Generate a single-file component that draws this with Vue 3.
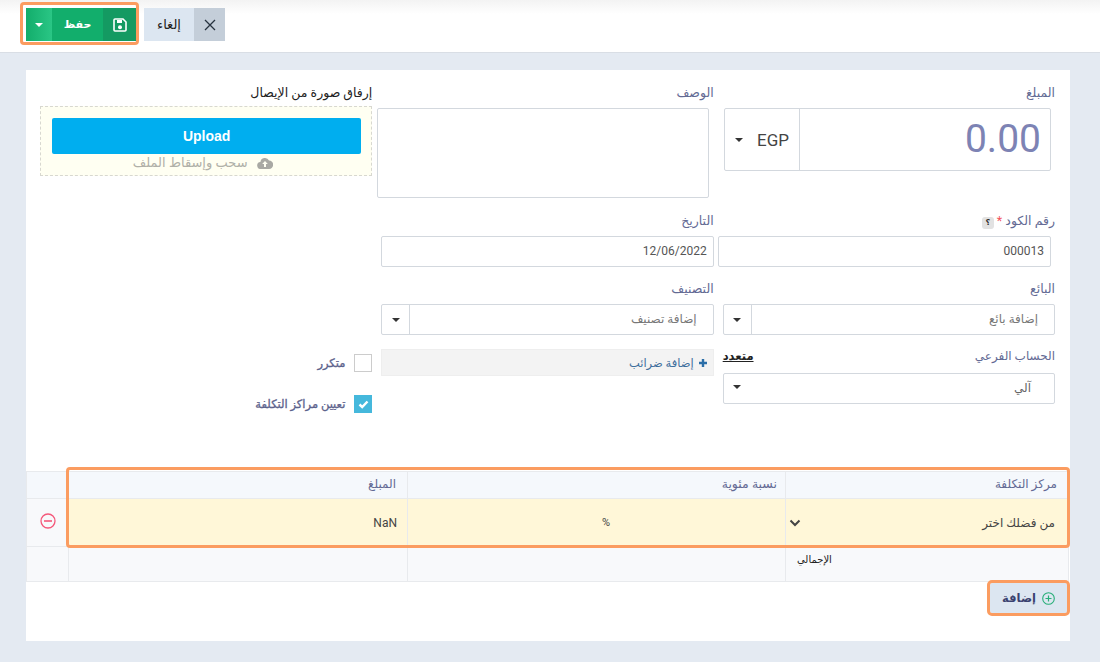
<script setup>
const rows = [
  { label: 'مركز التكلفة' },
];
</script>

<template>
  <div class="page">
    <header class="topbar">
      <div class="save-mark">
        <div class="save-group">
          <button class="seg seg-caret"><span class="caret white"></span></button>
          <button class="seg seg-save">حفظ</button>
          <button class="seg seg-icon">
            <svg width="14" height="14" viewBox="0 0 14 14"><path d="M2 1h8l3 3v8a1 1 0 0 1-1 1H2a1 1 0 0 1-1-1V2a1 1 0 0 1 1-1z" fill="none" stroke="#fff" stroke-width="1.6"/><rect x="4" y="2" width="5" height="3" fill="#fff"/><circle cx="7" cy="9.3" r="2" fill="#fff"/></svg>
          </button>
        </div>
      </div>
      <div class="cancel-group">
        <button class="cancel-text">إلغاء</button>
        <button class="cancel-x">
          <svg width="12" height="12" viewBox="0 0 12 12"><path d="M1 1l10 10M11 1L1 11" stroke="#26323f" stroke-width="1.3" fill="none"/></svg>
        </button>
      </div>
    </header>

    <main class="card" dir="rtl">
      <section class="row row1">
        <div class="field">
          <label class="lbl">المبلغ</label>
          <div class="amount">
            <div class="amount-value" dir="ltr">0.00</div>
            <div class="amount-cur" dir="ltr"><span class="caret"></span><span class="cur">EGP</span></div>
          </div>
        </div>
        <div class="field">
          <label class="lbl">الوصف</label>
          <div class="textarea"></div>
        </div>
        <div class="field upload-field">
          <label class="lbl dark">إرفاق صورة من الإيصال</label>
          <div class="drop">
            <button class="upload-btn" dir="ltr">Upload</button>
            <div class="drop-hint">
              <svg width="16" height="12" viewBox="0 0 16 12"><path d="M4 12a3.5 3.5 0 0 1-.6-7A4.5 4.5 0 0 1 12 3.6 4.2 4.2 0 0 1 12 12z" fill="#a9a9a4"/><path d="M8 4L5.2 7H7v3h2V7h1.800z" fill="#fffff2"/></svg>
              <span>سحب وإسقاط الملف</span>
            </div>
          </div>
        </div>
      </section>

      <section class="row row2">
        <div class="field">
          <label class="lbl">رقم الكود <span class="req">*</span> <span class="help">؟</span></label>
          <div class="input code">000013</div>
        </div>
        <div class="field">
          <label class="lbl">التاريخ</label>
          <div class="input date">12/06/2022</div>
        </div>
      </section>

      <section class="row row3">
        <div class="field">
          <label class="lbl">البائع</label>
          <div class="select">
            <span class="sel-text">إضافة بائع</span>
            <span class="sel-btn"><span class="caret"></span></span>
          </div>
        </div>
        <div class="field">
          <label class="lbl">التصنيف</label>
          <div class="select narrow">
            <span class="sel-text">إضافة تصنيف</span>
            <span class="sel-btn"><span class="caret"></span></span>
          </div>
        </div>
      </section>

      <section class="row row4">
        <div class="field">
          <div class="lbl-row">
            <label class="lbl sub">الحساب الفرعي</label>
            <a class="multi">متعدد</a>
          </div>
          <div class="select plain">
            <span class="sel-text auto">آلي</span>
            <span class="sel-btn bare"><span class="caret"></span></span>
          </div>
        </div>
        <div class="field">
          <div class="tax">
            <svg width="10" height="10" viewBox="0 0 10 10"><path d="M5 1v8M1 5h8" stroke="#2b6ea8" stroke-width="2.400"/></svg>
            <span>إضافة ضرائب</span>
          </div>
        </div>
        <div class="field checks">
          <div class="check-row"><span class="box"></span><span class="check-lbl">متكرر</span></div>
          <div class="check-row">
            <span class="box on">
              <svg width="11" height="9" viewBox="0 0 11 9"><path d="M1.500 4.500l2.700 2.500 5.300-5.500" stroke="#fff" stroke-width="2.400" fill="none"/></svg>
            </span>
            <span class="check-lbl">تعيين مراكز التكلفة</span>
          </div>
        </div>
      </section>

      <section class="cost">
        <div class="cost-mark"></div>
        <table class="table">
          <colgroup><col class="c1"><col class="c2"><col class="c3"><col class="c4"></colgroup>
          <thead>
            <tr><th>مركز التكلفة</th><th class="th2">نسبة مئوية</th><th>المبلغ</th><th></th></tr>
          </thead>
          <tbody>
            <tr class="active" v-for="r in rows" :key="r.label">
              <td>
                <div class="cost-select">
                  <span>من فضلك اختر</span>
                  <svg width="12" height="8" viewBox="0 0 12 8"><path d="M1.500 1.500L6 6l4.500-4.500" stroke="#444" stroke-width="2" fill="none"/></svg>
                </div>
              </td>
              <td class="pct">%</td>
              <td class="nan">NaN</td>
              <td class="rm">
                <svg width="16" height="16" viewBox="0 0 16 16"><circle cx="8" cy="8" r="7" fill="none" stroke="#f4587a" stroke-width="1.300"/><path d="M4 8h8" stroke="#f4587a" stroke-width="1.600"/></svg>
              </td>
            </tr>
            <tr class="total">
              <td><span class="total-lbl">الإجمالي</span></td><td></td><td></td><td></td>
            </tr>
          </tbody>
        </table>
        <div class="add-row">
          <button class="add-btn">
            <svg width="13" height="13" viewBox="0 0 13 13"><circle cx="6.500" cy="6.500" r="5.800" fill="none" stroke="#27ae78" stroke-width="1.100"/><path d="M6.500 3.500v6M3.500 6.500h6" stroke="#27ae78" stroke-width="1.200"/></svg>
            <span>إضافة</span>
          </button>
        </div>
      </section>
    </main>
  </div>
</template>

<style>
html, body { margin: 0; background: #e4eaf2; }
</style>

<style scoped>
.page {
  width: 1100px;
  height: 662px;
  overflow: hidden;
  background: #e4eaf2;
  font-family: Roboto, "DejaVu Sans", sans-serif;
  color: #444;
}
button { border: 0; padding: 0; font: inherit; }
.topbar {
  height: 53px;
  box-sizing: border-box;
  padding: 2px 0 0 20px;
  display: flex;
  align-items: flex-start;
  gap: 5px;
  background: linear-gradient(#f3f3f3, #fff 14px);
  border-bottom: 1px solid #d9dee5;
}
.save-mark {
  border: 3px solid #fb9c60;
  border-radius: 4px;
  padding: 3px 0 1px 3px;
  background: #fff;
}
.save-group { display: flex; height: 33px; width: 110px; }
.seg { height: 33px; color: #fff; display: flex; align-items: center; justify-content: center; }
.seg-caret { width: 26px; background: linear-gradient(90deg, #12ad6b, #2ac685); }
.seg-save { width: 51px; background: #12ae6c; font-size: 11px; font-weight: 700; }
.seg-icon { width: 33px; background: #149a62; }
.caret { display: inline-block; width: 0; height: 0; border-left: 4px solid transparent; border-right: 4px solid transparent; border-top: 4px solid #333; }
.caret.white { border-top-color: #fff; }
.cancel-group { display: flex; height: 33px; margin-top: 6px; }
.cancel-text { width: 50px; background: #dce6f1; color: #222; font-size: 13px; }
.cancel-x { width: 31px; background: #c4ced9; display: flex; align-items: center; justify-content: center; }

.card {
  margin: 17px 30px 0 26px;
  height: 571px;
  box-sizing: border-box;
  padding-top: 15px;
  background: #fff;
}
.row {
  display: grid;
  grid-template-columns: repeat(3, 332.330px);
  column-gap: 9px;
  padding: 0 15px 0 14px;
}
.row1 { height: 128px; }
.row2, .row3 { height: 68px; }
.row4 { height: 122px; }
.field { min-width: 0; }
.lbl { display: block; height: 23px; line-height: 15px; font-size: 12.500px; color: #636a94; }
.lbl.sub { font-size: 12px; }
.lbl.dark { color: #222; height: 21px; }
.req { color: #f2545b; }
.help { display: inline-block; width: 12px; height: 12px; line-height: 12px; background: #e2e2e2; border-radius: 3px; text-align: center; font-size: 8px; color: #333; font-weight: 700; }
.amount {
  display: flex;
  width: 327px;
  height: 63px;
  margin-right: 4px;
  box-sizing: border-box;
  border: 1px solid #d3d8de;
  border-radius: 2px;
}
.amount-value {
  flex: 1;
  text-align: right;
  padding-right: 9px;
  font-size: 39px;
  line-height: 61px;
  color: #7d83b4;
}
.amount-cur {
  width: 75px;
  box-sizing: border-box;
  border-right: 1px solid #d3d8de;
  display: flex;
  align-items: center;
  padding-left: 10px;
  gap: 14px;
  font-size: 17px;
  color: #444;
  order: 1;
}
.textarea {
  width: 332px;
  height: 90px;
  margin-right: 5px;
  box-sizing: border-box;
  border: 1px solid #d3d8de;
  border-radius: 2px;
}
.drop {
  height: 70px;
  box-sizing: border-box;
  border: 1px dashed #d8d8d0;
  background: #fffff2;
  padding: 11px 10px 0 11px;
}
.upload-btn {
  display: block;
  width: 100%;
  height: 36px;
  background: #00aeef;
  color: #fff;
  border-radius: 2px;
  font-family: "Liberation Sans", sans-serif;
  font-size: 14px;
  font-weight: 700;
}
.drop-hint {
  display: flex;
  align-items: center;
  justify-content: center;
  gap: 9px;
  padding-right: 8px;
  font-size: 13px;
  line-height: 18px;
  color: #b0b0a8;
}
.input {
  height: 31px;
  box-sizing: border-box;
  border: 1px solid #d3d8de;
  border-radius: 2px;
  line-height: 29px;
  padding: 0 6px;
  font-size: 12px;
  color: #555;
  text-align: right;
}
.code { margin-right: 4px; margin-left: -5px; }
.select {
  display: flex;
  align-items: stretch;
  height: 31px;
  box-sizing: border-box;
  border: 1px solid #d3d8de;
  border-radius: 2px;
}
.sel-text {
  flex: 1;
  padding-right: 16px;
  line-height: 29px;
  font-size: 12px;
  color: #777;
}
.sel-text.auto { padding-right: 23px; font-size: 12px; color: #666; }
.sel-btn {
  width: 27px;
  border-right: 1px solid #d3d8de;
  display: flex;
  align-items: center;
  justify-content: center;
}
.sel-btn.bare { border-right: 0; padding-bottom: 3px; box-sizing: border-box; }
.lbl-row { display: flex; justify-content: space-between; height: 24px; }
.multi { font-size: 11.500px; font-weight: 700; color: #222; text-decoration: underline; line-height: 15px; }
.tax {
  height: 27px;
  box-sizing: border-box;
  background: #f3f3f3;
  border: 1px solid #eee;
  display: flex;
  align-items: center;
  gap: 4px;
  padding-right: 5px;
  font-size: 11.500px;
  color: #3f6f9d;
}
.checks { display: flex; flex-direction: column; gap: 23px; padding-top: 5px; }
.check-row { display: flex; align-items: center; gap: 9px; height: 18px; }
.box { width: 18px; height: 18px; box-sizing: border-box; border: 1px solid #ccc; display: flex; align-items: center; justify-content: center; }
.box.on { background: #45b8dc; border-color: #45b8dc; }
.check-lbl { font-size: 11.500px; color: #5c628c; -webkit-text-stroke: 0.3px #5c628c; }

.cost { position: relative; }
.cost-mark {
  position: absolute;
  right: 0;
  left: 40px;
  top: -4px;
  height: 81px;
  box-sizing: border-box;
  border: 3px solid #fb9c60;
  border-radius: 4px;
  z-index: 1;
  pointer-events: none;
}
.table {
  width: 1042px;
  margin-right: 1px;
  border-collapse: collapse;
  table-layout: fixed;
  font-size: 11px;
}
.c1 { width: 283px; }
.c2 { width: 378px; }
.c3 { width: 339px; }
.c4 { width: 42px; }
th, td { border: 1px solid #e8eaed; padding: 0 11px; text-align: right; }
th { height: 27px; padding-bottom: 3px; box-sizing: border-box; background: #f5f8fc; font-weight: 400; color: #636a94; font-size: 12px; }
.th2 { font-size: 12.500px; padding-right: 8px; }
.active td { height: 47px; background: #fff7d8; }
.active .rm { background: #f8f9fb; padding: 0; text-align: center; }
.rm svg { display: block; margin: 0 auto 3px; }
.cost-select { display: flex; justify-content: space-between; align-items: center; padding: 0 2px 0 0; color: #444; font-size: 12px; margin-left: -8px; }
.pct { padding-right: 175px; }
.nan { font-size: 12px; color: #444; padding-right: 10px; }
.total td { height: 34px; background: #f8f9fb; vertical-align: top; }
.total-lbl { display: block; text-align: left; padding-top: 7px; font-size: 10px; color: #222; }
.add-row { display: flex; }
.add-btn {
  width: 77px;
  height: 30px;
  margin: 1px 3px 0 0;
  background: #dce6f1;
  color: #3a4270;
  font-size: 11.500px;
  font-weight: 700;
  display: flex;
  align-items: center;
  justify-content: center;
  gap: 6px;
  outline: 3px solid #fb9c60;
  border-radius: 2px;
}
</style>
